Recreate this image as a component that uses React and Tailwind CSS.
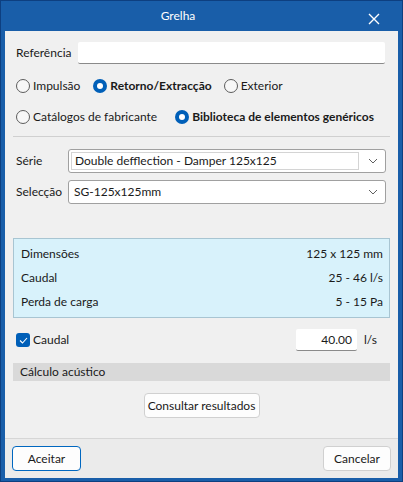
import React from 'react'

const font = { fontFamily: 'Lato, "Noto Sans", sans-serif' }

const Radio = ({ checked, label }) => (
    <label className="flex items-center gap-[3px] whitespace-nowrap">
        {checked ? (
            <span className="w-[14px] h-[14px] rounded-full bg-[#005fb8] flex items-center justify-center">
                <span className="w-[6px] h-[6px] rounded-full bg-white" />
            </span>
        ) : (
            <span className="w-[14px] h-[14px] rounded-full border border-[#5c5c5c] bg-[#f7f7f7]" />
        )}
        <span className={checked ? 'font-bold text-[#1a1a1a]' : 'text-[#1a1a1a]'}>{label}</span>
    </label>
)

const Chevron = () => (
    <svg width="10" height="6" viewBox="0 0 10 6" className="shrink-0">
        <path d="M1 1 L5 5 L9 1" fill="none" stroke="#606060" strokeWidth="1" />
    </svg>
)

const InfoRow = ({ label, value }) => (
    <div className="flex items-center justify-between h-[24px]">
        <span>{label}</span>
        <span>{value}</span>
    </div>
)

const App = () => {
    return (
        <div
            className="w-[403px] h-[482px] bg-[#195ea9] border border-[#0d3f80] flex flex-col px-[4px] pb-[3px] text-[12px] text-[#1a1a1a] leading-none whitespace-nowrap"
            style={font}
        >
            <div className="h-[30px] shrink-0 relative flex items-center justify-center pr-[47px]">
                <span className="text-white">Grelha</span>
                <svg width="12" height="12" viewBox="0 0 12 12" className="absolute right-[18px] top-[12px]">
                    <path d="M1 1 L11 11 M11 1 L1 11" stroke="white" strokeWidth="1.4" />
                </svg>
            </div>

            <div className="flex-1 bg-[#f0f0f0] flex flex-col">
                <div className="flex flex-col px-[8px]">
                    {/* referência */}
                    <div className="mt-[11px] h-[22px] flex items-center pl-[3px] pr-[5px]">
                        <span className="w-[62px]">Referência</span>
                        <div className="flex-1 h-full bg-white border-b border-[#8a8a8a] rounded-[2px]" />
                    </div>

                    <div className="mt-[12px] h-[20px] flex items-center pl-[3px]">
                        <Radio label="Impulsão" />
                        <div className="w-[13px]" />
                        <Radio checked label="Retorno/Extracção" />
                        <div className="w-[12px]" />
                        <Radio label="Exterior" />
                    </div>
                    <div className="mt-[11px] h-[20px] flex items-center pl-[3px]">
                        <Radio label="Catálogos de fabricante" />
                        <div className="w-[18px]" />
                        <Radio checked label="Biblioteca de elementos genéricos" />
                    </div>

                    <div className="mt-[9px] h-px bg-[#d0d0d0]" />

                    {/* série / selecção */}
                    <div className="mt-[12px] h-[24px] flex items-center pl-[3px] pr-[4px]">
                        <span className="w-[52px]">Série</span>
                        <div className="flex-1 h-full bg-white border border-[#a0a0a0] rounded-[3px] flex items-center p-[2px] pr-[7px]">
                            <div className="flex-1 h-full border border-[#d4d4d4] flex items-center pl-[3px]">
                                Double defflection - Damper 125x125
                            </div>
                            <div className="w-[9px]" />
                            <Chevron />
                        </div>
                    </div>
                    <div className="mt-[7px] h-[24px] flex items-center pl-[3px] pr-[4px]">
                        <span className="w-[52px]">Selecção</span>
                        <div className="flex-1 h-full bg-white border border-[#a0a0a0] rounded-[3px] flex items-center pl-[5px] pr-[7px]">
                            <span className="flex-1">SG-125x125mm</span>
                            <Chevron />
                        </div>
                    </div>

                    {/* info */}
                    <div className="mt-[34px] h-[80px] bg-[#d8f2fb] border border-[#a8c5d2] flex flex-col justify-center px-[7px] pr-[6px]">
                        <InfoRow label="Dimensões" value="125 x 125 mm" />
                        <InfoRow label="Caudal" value="25 - 46 l/s" />
                        <InfoRow label="Perda de carga" value="5 - 15 Pa" />
                    </div>

                    {/* caudal */}
                    <div className="mt-[11px] h-[22px] flex items-center pl-[3px] pr-[13px]">
                        <span className="w-[14px] h-[14px] rounded-[3px] bg-[#005fb8] flex items-center justify-center">
                            <svg width="9" height="7" viewBox="0 0 9 7">
                                <path d="M1 3.5 L3.5 6 L8 1" fill="none" stroke="white" strokeWidth="1.1" />
                            </svg>
                        </span>
                        <span className="ml-[3px] flex-1">Caudal</span>
                        <div className="w-[61px] h-full bg-white border-b border-[#8a8a8a] rounded-[2px] flex items-center justify-end pr-[5px]">
                            40.00
                        </div>
                        <span className="ml-[7px]">l/s</span>
                    </div>

                    <div className="mt-[12px] h-[18px] bg-[#d9d9d9] flex items-center pl-[7px]">
                        Cálculo acústico
                    </div>

                    <div className="mt-[12px] flex justify-center">
                        <button className="h-[25px] w-[116px] bg-[#fdfdfd] border border-[#d0d0d0] rounded-[4px]">
                            Consultar resultados
                        </button>
                    </div>
                </div>

                <div className="mt-auto h-[40px] border-t border-[#d6d6d6] bg-[#ebebeb] flex items-start justify-between pt-[7px] px-[7px]">
                    <button className="h-[25px] w-[69px] bg-[#fdfdfd] border border-[#0067c0] rounded-[4px]">
                        Aceitar
                    </button>
                    <button className="h-[25px] w-[68px] bg-[#fdfdfd] border border-[#d0d0d0] rounded-[4px]">
                        Cancelar
                    </button>
                </div>
            </div>
        </div>
    )
}

export default App
